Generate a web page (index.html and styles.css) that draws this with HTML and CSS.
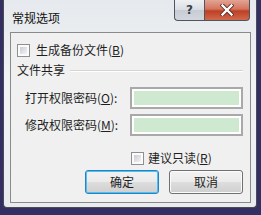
FILE: index.html
```html
<!DOCTYPE html>
<html lang="zh-CN">
<head>
    <meta charset="UTF-8">
    <title>常规选项</title>
    <link rel="stylesheet" href="styles.css">
</head>
<body>
    <div class="frame">
        <div class="titlebar">
            <span class="title">常规选项</span>
            <div class="caption-buttons">
                <div class="cap-help">?</div>
                <div class="cap-close">
                    <svg width="14" height="12" viewBox="0 0 14 12">
                        <path d="M2.5 1.5 L11.5 10.5 M11.5 1.5 L2.5 10.5" stroke="#5a2a22" stroke-width="4" stroke-linecap="square"/>
                        <path d="M2.5 1.5 L11.5 10.5 M11.5 1.5 L2.5 10.5" stroke="#fff" stroke-width="2.4" stroke-linecap="square"/>
                    </svg>
                </div>
            </div>
        </div>
        <div class="client">
            <div class="row row-backup">
                <span class="check"></span>
                <span>生成备份文件(<u>B</u>)</span>
            </div>
            <div class="row row-group">
                <span>文件共享</span>
                <span class="sep"></span>
            </div>
            <div class="row row-field first">
                <span class="label">打开权限密码(<u>O</u>):</span>
                <span class="input"></span>
            </div>
            <div class="row row-field">
                <span class="label">修改权限密码(<u>M</u>):</span>
                <span class="input"></span>
            </div>
            <div class="row row-readonly">
                <span class="check"></span>
                <span>建议只读(<u>R</u>)</span>
            </div>
            <div class="row row-buttons">
                <button class="btn default">确定</button>
                <button class="btn">取消</button>
            </div>
        </div>
    </div>
</body>
</html>
```
FILE: styles.css
```css
body { margin: 0; width: 261px; height: 215px; box-sizing: border-box; padding: 0 4px 7px 3px; background: #332f63; font-family: "Noto Sans CJK SC", "Liberation Sans", sans-serif; font-size: 12px; color: #1e1e1e; overflow: hidden; }
.frame { height: 100%; box-sizing: border-box; display: flex; flex-direction: column; padding: 0 5px 4px 6px; border: 1px solid #4b4a58; border-top: none; border-radius: 0 0 4px 4px; background: linear-gradient(to bottom, #e6e9ed 0%, #f1f3f5 40%, #e9ecef 100%); }
.titlebar { height: 32px; display: flex; justify-content: space-between; align-items: flex-start; }
.title { margin: 10px 0 0 2px; line-height: 16px; font-size: 12px; color: #111; }
.caption-buttons { display: flex; margin-right: 1px; }
.cap-help, .cap-close { height: 21px; box-sizing: border-box; border: 1px solid #505660; border-top: none; display: flex; justify-content: center; align-items: center; }
.cap-help { width: 30px; border-right: none; border-radius: 0 0 0 4px; background: linear-gradient(to bottom, #eef0f3 0%, #d9dde3 50%, #c7ccd4 51%, #d3d7dd 100%); font-family: "DejaVu Sans", sans-serif; font-size: 12px; font-weight: bold; color: #3b3f48; line-height: 1; }
.cap-close { width: 46px; border-radius: 0 0 4px 0; background: linear-gradient(to bottom, #e3a494 0%, #d4755e 45%, #bf3f24 55%, #cf6a4c 100%); }
.client { flex: 1; display: flex; flex-direction: column; padding: 9px 7px 0 6px; border: 1px solid #8a8a8a; background: #f0f0f0; }
.row { display: flex; align-items: center; height: 16px; line-height: 16px; white-space: nowrap; }
.check { width: 13px; height: 13px; box-sizing: border-box; border: 1px solid #8e8f8f; padding: 2px; background: linear-gradient(135deg, #c9ccd2, #f3f4f5) content-box, #fbfbfb; margin-right: 6px; }
.row-group { margin-top: 4px; }
.sep { flex: 1; height: 1px; background: #d5d5d5; border-bottom: 1px solid #fff; margin: 1px 0 0 5px; }
.row-field { height: 22px; margin-top: 5px; }
.row-field.first { margin-top: 9px; }
.label { margin-left: 8px; }
.input { margin-left: auto; width: 113px; height: 22px; box-sizing: border-box; border: 2px solid #a9a9a9; padding: 2px; background: linear-gradient(#cfe8d0, #cfe8d0) content-box, #fff; }
.row-readonly { margin: 14px 0 0 114px; }
.row-readonly .check { margin-right: 4px; }
.row-buttons { height: 24px; margin-top: 4px; justify-content: flex-end; gap: 10px; }
.btn { width: 74px; height: 24px; padding: 0; border: 1px solid #707070; border-radius: 3px; background: linear-gradient(to bottom, #f2f2f2 0%, #ebebeb 48%, #dddddd 52%, #cfcfcf 100%); box-shadow: inset 0 0 0 1px #fbfbfb; font-family: "Noto Sans CJK SC", sans-serif; font-size: 12px; color: #1e1e1e; line-height: 20px; }
.btn.default { border-color: #2c7fc0; box-shadow: inset 0 0 0 1px #48c4f4; }
```
